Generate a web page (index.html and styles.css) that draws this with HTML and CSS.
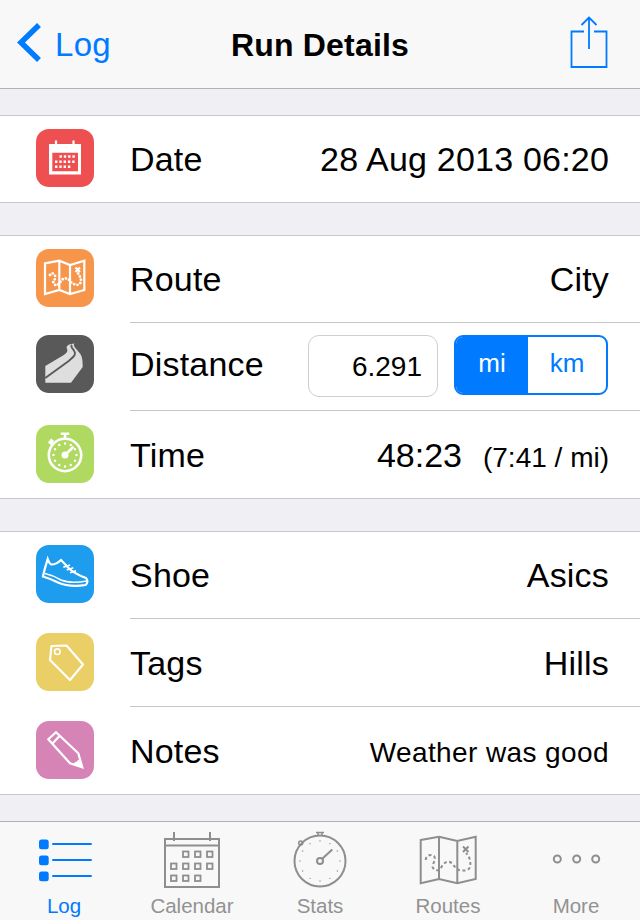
FILE: index.html
```html
<!DOCTYPE html>
<html lang="en">
<head>
    <meta charset="UTF-8">
    <meta name="viewport" content="width=device-width, initial-scale=1.0">
    <title>Run Details</title>
    <link rel="stylesheet" href="styles.css">
</head>
<body>
<header class="nav">
    <a class="nav-back">
        <svg class="back-icon" width="28" height="46" viewBox="0 0 28 46"><path d="M25 4 L7 21.500 L25 39"/></svg>
        <span>Log</span>
    </a>
    <h1 class="nav-title">Run Details</h1>
    <div class="nav-share">
        <svg width="38" height="52" viewBox="0 0 38 52"><path d="M14 15.500 H1.500 V51 H36.500 V15.500 H24 M19 1.500 V33 M11.500 9 L19 1.500 L26.500 9"/></svg>
    </div>
</header>

<main class="content">
    <section class="group">
        <div class="row row-single">
            <div class="icon icon-red">
                <svg viewBox="0 0 58 58">
                    <path class="fill" fill-rule="evenodd" d="M13 15 H45 V45.500 H13 Z M16.300 23.700 V42.300 H42 V23.700 Z"/>
                    <path class="line" d="M20 11.500 V16 M37.500 11.500 V16"/>
                    <path class="grid-dots" d="M23.500 27.500 H40.500 M19 32.700 H40.500 M19 37.800 H36"/>
                </svg>
            </div>
            <div class="row-body">
                <span class="label">Date</span>
                <span class="value">28 Aug 2013 06:20</span>
            </div>
        </div>
    </section>

    <section class="group">
        <div class="row">
            <div class="icon icon-orange">
                <svg viewBox="0 0 58 58">
                    <path class="line" d="M9 14.300 L23.300 11.700 L34 16 L48.300 11.700 V41 L34 45 L23.300 41 L9 45 Z M23.300 11.700 V41 M34 16 V45"/>
                    <path class="route-dots" d="M14 26 C16 22 20 26 19.300 29 C18.500 32 16 33 18 35 C21 38 23 35 25 32 C27 29 31 28 34 32 C36 35 41 37 43.500 35 C46 33 45 28 41.700 24"/>
                    <path class="line" d="M39.500 18.500 L44 23 M44 18.500 L39.500 23"/>
                </svg>
            </div>
            <div class="row-body">
                <span class="label">Route</span>
                <span class="value">City</span>
            </div>
        </div>
        <div class="row row-tall row-distance">
            <div class="icon icon-dark">
                <svg viewBox="0 0 58 58">
                    <path class="road" d="M9.300 31 L27 20.500 C31 18 32.500 16 30.500 12.500 C31 10 34 9 38.500 8.500 C36 11 41 14 44 18.500 C46 21.500 46.700 24 46.700 32 L35 47.700 H9.300 Z"/>
                    <path class="road-line" d="M9.300 43 L32 26.500 C37 22 41 20 38 15.500 C36.500 13 34 12 36 10"/>
                </svg>
            </div>
            <div class="row-body">
                <span class="label">Distance</span>
                <div class="distance">
                    <div class="field">6.291</div>
                    <div class="segment">
                        <span class="segment-on">mi</span>
                        <span>km</span>
                    </div>
                </div>
            </div>
        </div>
        <div class="row row-last">
            <div class="icon icon-green">
                <svg viewBox="0 0 58 58">
                    <circle class="line-bold" cx="29" cy="30" r="16.200"/>
                    <path class="line-bold" d="M29 9 V13.500 M24.700 8.700 H33.300"/>
                    <path class="line-knob" d="M13.500 15.500 L16.500 18"/>
                    <circle class="watch-dots" cx="29" cy="30" r="11.500" pathLength="12"/>
                    <path class="line-bold" d="M29 30 L37.500 21.700"/>
                    <circle class="fill" cx="29" cy="30" r="3.500"/>
                </svg>
            </div>
            <div class="row-body">
                <span class="label">Time</span>
                <span class="value"><span>48:23</span><span class="pace">(7:41 / mi)</span></span>
            </div>
        </div>
    </section>

    <section class="group">
        <div class="row">
            <div class="icon icon-blue">
                <svg viewBox="0 0 58 58">
                    <path class="line" d="M11.700 14 C10 20 8 26 7 31.500 C12 33 16 34.500 22 37.500 C30 41 40 41.500 49.500 40 C52 38 52 35 50 33 C43 30.500 37 27.500 32 22.500 C29.500 19.500 27 17 25 15 C22 18 18 19.500 15.500 19.500 C13.500 19 12.500 16 11.700 14 Z"/>
                    <path class="line-thin" d="M9 28.500 C16 30 20 32 25 35 C32 38 42 37.500 51 36 M27.300 22.300 L34 20 M30.700 25 L37.300 22.700 M34 27.700 L40 25.700"/>
                </svg>
            </div>
            <div class="row-body">
                <span class="label">Shoe</span>
                <span class="value">Asics</span>
            </div>
        </div>
        <div class="row row-tall row-low">
            <div class="icon icon-yellow">
                <svg viewBox="0 0 58 58">
                    <path class="line" d="M15.500 13 L30.500 12.500 L47 31.500 L34 47 L14 27 Z" stroke-linejoin="round"/>
                    <circle class="line-thin" cx="21.300" cy="18.700" r="2.800"/>
                </svg>
            </div>
            <div class="row-body">
                <span class="label">Tags</span>
                <span class="value">Hills</span>
            </div>
        </div>
        <div class="row row-last">
            <div class="icon icon-pink">
                <svg viewBox="0 0 58 58">
                    <path class="line" d="M12.300 18.300 L20 11.300 L42.300 32.300 L46.300 46.300 L34 42.300 Z M16.500 22.500 L23.500 15"/>
                    <path class="fill" d="M46.300 46.300 L38 43.800 C38 41 40 40.500 41 41 C41 39 43 38.500 44 39 Z"/>
                </svg>
            </div>
            <div class="row-body">
                <span class="label">Notes</span>
                <span class="value value-small">Weather was good</span>
            </div>
        </div>
    </section>
</main>

<nav class="tabs">
    <div class="tab tab-active">
        <svg viewBox="0 0 64 60">
            <rect class="bullet" x="7" y="11.500" width="9.700" height="9.700" rx="2.500"/>
            <rect class="bullet" x="7" y="27.500" width="9.700" height="9.700" rx="2.500"/>
            <rect class="bullet" x="7" y="43.500" width="9.700" height="9.700" rx="2.500"/>
            <path class="tab-line" d="M20.300 16 H59.700 M20.300 32 H59.700 M20.300 48 H59.700"/>
        </svg>
        <span>Log</span>
    </div>
    <div class="tab">
        <svg viewBox="0 0 64 60">
            <path class="tab-line" d="M5 11 H59 V59 H5 Z M5 17.500 H59 M14 4 V13 M50 4 V13"/>
            <g class="tab-thin">
                <rect x="23" y="23.500" width="5.500" height="5.500"/>
                <rect x="35" y="23.500" width="5.500" height="5.500"/>
                <rect x="47" y="23.500" width="5.500" height="5.500"/>
                <rect x="11" y="35.500" width="5.500" height="5.500"/>
                <rect x="23" y="35.500" width="5.500" height="5.500"/>
                <rect x="35" y="35.500" width="5.500" height="5.500"/>
                <rect x="47" y="35.500" width="5.500" height="5.500"/>
                <rect x="11" y="47.500" width="5.500" height="5.500"/>
                <rect x="23" y="47.500" width="5.500" height="5.500"/>
                <rect x="35" y="47.500" width="5.500" height="5.500"/>
            </g>
        </svg>
        <span>Calendar</span>
    </div>
    <div class="tab">
        <svg viewBox="0 0 64 60">
            <circle class="tab-line" cx="32" cy="33" r="25.500"/>
            <path class="tab-thin-line" d="M28 4.500 H36 M30 4.500 V7.500 M34 4.500 V7.500"/>
            <circle class="tab-thin-line" cx="12.700" cy="15" r="2"/>
            <circle class="tab-dots" cx="32" cy="33" r="20" pathLength="12"/>
            <path class="tab-line" d="M34 31 L44.300 21.500"/>
            <circle class="tab-line" cx="32" cy="33" r="3"/>
        </svg>
        <span>Stats</span>
    </div>
    <div class="tab">
        <svg viewBox="0 0 64 60">
            <path class="tab-line" d="M4.700 12 L23 8.700 L41.300 13 L59.700 8.700 V51 L41.300 55.300 L23 51 L4.700 55.300 Z M23 8.700 V51 M41.300 13 V55.300"/>
            <path class="tab-dash" d="M9.700 32 C10 27 15 26 18 28 C21 32 15 37 17 40 C20 43 23 43 25 40 C27 35 31 33 34 34 C38 36 39 41 43 42 C47 43 53 43 54 39 C55 34 54 29 50 25"/>
            <path class="tab-line" d="M47 18.500 L52.500 24 M52.500 18.500 L47 24"/>
        </svg>
        <span>Routes</span>
    </div>
    <div class="tab">
        <svg viewBox="0 0 64 60">
            <circle class="tab-line" cx="13.300" cy="31" r="3.500"/>
            <circle class="tab-line" cx="32.700" cy="31" r="3.500"/>
            <circle class="tab-line" cx="51.700" cy="31" r="3.500"/>
        </svg>
        <span>More</span>
    </div>
</nav>
</body>
</html>
```

FILE: styles.css
```css
* {
    box-sizing: border-box;
}
body {
    margin: 0;
    height: 920px;
    overflow: hidden;
    display: flex;
    flex-direction: column;
    background-color: #efeff4;
    color: #000;
    font-family: "Liberation Sans", Arial, sans-serif;
}

/* top bar */
.nav {
    flex: none;
    height: 89px;
    display: grid;
    grid-template-columns: 1fr auto 1fr;
    align-items: center;
    background-color: #f8f8f8;
    border-bottom: 1px solid #b2b2b2;
}
.nav-back {
    display: flex;
    align-items: center;
    gap: 15px;
    padding-left: 17px;
    color: #007aff;
    font-size: 33px;
    letter-spacing: 0.3px;
}
.nav-back span {
    margin-top: 2px;
}
.back-icon {
    margin-left: -3px;
    margin-right: -2px;
}
.back-icon path {
    fill: none;
    stroke: #007aff;
    stroke-width: 5.500;
}
.nav-title {
    margin: 2px 0 0;
    font-size: 32px;
    font-weight: bold;
    letter-spacing: 0.2px;
}
.nav-share {
    display: flex;
    justify-content: flex-end;
    padding-right: 32px;
    height: 52px;
    margin-top: -5px;
}
.nav-share path {
    fill: none;
    stroke: #007aff;
    stroke-width: 1.800;
}

/* table groups */
.content {
    flex: 1;
    min-height: 0;
    padding-top: 26px;
}
.group {
    background-color: #fff;
    border-top: 1px solid #c8c7cc;
    border-bottom: 1px solid #c8c7cc;
    margin-bottom: 32px;
}
.row {
    display: flex;
    height: 87px;
    padding-left: 36px;
    gap: 36px;
}
.row-single {
    height: 86px;
}
.row-tall {
    height: 88px;
}
.row-body {
    flex: 1;
    display: flex;
    align-items: center;
    justify-content: space-between;
    padding-right: 31px;
    border-bottom: 1px solid #c8c7cc;
}
.row-low .row-body,
.row-last .row-body {
    padding-top: 2px;
}
.row-distance .row-body {
    padding-bottom: 4px;
}
.row-single .row-body,
.row-last .row-body {
    border-bottom: none;
}
.label,
.value {
    font-size: 34px;
    letter-spacing: 0.2px;
}
.value {
    display: flex;
    align-items: baseline;
}
.value span {
    letter-spacing: 0;
}
.value-small {
    margin-top: 3px;
    font-size: 28px;
    letter-spacing: 0.4px;
}
.pace {
    font-size: 28px;
    margin-left: 21px;
}

/* icons */
.icon {
    flex: none;
    width: 58px;
    height: 58px;
    margin-top: 13px;
    border-radius: 13px;
}
.row-tall .icon {
    margin-top: 12px;
}
.row-tall.row-low .icon,
.row-last .icon {
    margin-top: 14px;
}
.icon svg {
    display: block;
    width: 58px;
    height: 58px;
}
.icon-red {
    background-color: #ee5052;
}
.icon-orange {
    background-color: #f7954b;
}
.icon-dark {
    background-color: #595959;
}
.icon-green {
    background-color: #afd960;
}
.icon-blue {
    background-color: #1e9cee;
}
.icon-yellow {
    background-color: #e9cf65;
}
.icon-pink {
    background-color: #d683b5;
}
.fill {
    fill: #fff;
}
.line {
    fill: none;
    stroke: #fff;
    stroke-width: 2.200;
}
.line-bold {
    fill: none;
    stroke: #fff;
    stroke-width: 2.600;
}
.line-knob {
    fill: none;
    stroke: #fff;
    stroke-width: 5;
}
.line-thin {
    fill: none;
    stroke: #fff;
    stroke-width: 1.600;
}
.grid-dots {
    fill: none;
    stroke: #fff;
    stroke-width: 2.400;
    stroke-dasharray: 2.400 1.900;
}
.route-dots {
    fill: none;
    stroke: #fff;
    stroke-width: 2.800;
    stroke-linecap: round;
    stroke-dasharray: 0 3.400;
}
.road {
    fill: #dedede;
}
.road-line {
    fill: none;
    stroke: #595959;
    stroke-width: 1.800;
}
.watch-dots {
    fill: none;
    stroke: #fff;
    stroke-width: 2.500;
    stroke-linecap: round;
    stroke-dasharray: 0 1;
}

/* distance controls */
.distance {
    display: flex;
    align-items: flex-start;
    gap: 16px;
    margin-top: 3px;
    margin-right: 1px;
}
.field {
    width: 130px;
    height: 62px;
    padding-right: 15px;
    border: 1px solid #cfcfcf;
    border-radius: 11px;
    font-size: 28px;
    line-height: 62px;
    letter-spacing: 0;
    text-align: right;
}
.segment {
    display: flex;
    width: 154px;
    height: 60px;
    border: 2px solid #007aff;
    border-radius: 9px;
    overflow: hidden;
    color: #007aff;
    font-size: 26px;
}
.segment span {
    flex: 1;
    line-height: 52px;
    text-align: center;
}
.segment .segment-on {
    flex: none;
    width: 72px;
    background-color: #007aff;
    color: #fff;
}

/* bottom tabs */
.tabs {
    flex: none;
    display: flex;
    height: 99px;
    padding-top: 6px;
    background-color: #f8f8f8;
    border-top: 1px solid #b2b2b2;
}
.tab {
    width: 128px;
    display: flex;
    flex-direction: column;
    align-items: center;
    color: #929292;
    font-size: 20.500px;
}
.tab svg {
    display: block;
    width: 64px;
    height: 60px;
    margin-bottom: 6px;
}
.tab-active {
    color: #007aff;
}
.tab-line,
.tab-thin rect,
.tab-dash {
    fill: none;
    stroke: #8e8e8e;
    stroke-width: 2;
}
.tab-thin rect {
    stroke-width: 1.800;
}
.tab-thin-line {
    fill: none;
    stroke: #8e8e8e;
    stroke-width: 1.500;
}
.tab-dash {
    stroke-dasharray: 3 2.500;
}
.tab-dots {
    fill: none;
    stroke: #8e8e8e;
    stroke-width: 1.400;
    stroke-linecap: round;
    stroke-dasharray: 0 1;
}
.tab-active .tab-line {
    stroke: #007aff;
}
.bullet {
    fill: #007aff;
}
```
